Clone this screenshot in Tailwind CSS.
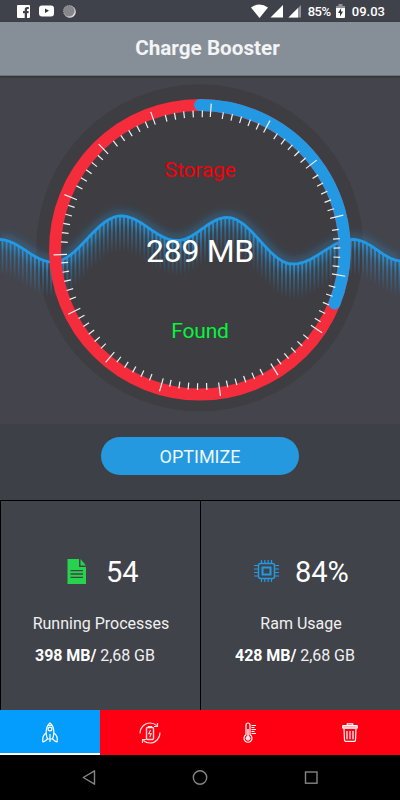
<!DOCTYPE html>
<html lang="en">

<head>
    <meta charset="UTF-8">
    <meta name="viewport" content="width=device-width, initial-scale=1.0">
    <title>Charge Booster</title>
    <script src="https://cdn.jsdelivr.net/npm/@tailwindcss/browser@4"></script>
</head>

<body class="bg-black">
    <div class="w-[400px] h-[800px] flex flex-col overflow-hidden bg-[#3f4149] text-white font-['Roboto',sans-serif]">

        <!-- Status bar -->
        <div class="h-[22px] shrink-0 flex items-center justify-between bg-[#40424b] pl-[17px] pr-[15px]">
            <div class="flex items-center gap-[9px]">
                <svg class="w-[13px] h-[13px]" viewBox="0 0 13 13">
                    <path fill="#fff" d="M1 0h11a1 1 0 0 1 1 1v11a1 1 0 0 1-1 1h-2V8.2h1.6V6.1H10V5c0-.7.3-1 1-1h.8V2h-1.6C8.500 2 7.700 3.100 7.700 4.700v1.400H6v2.100h1.700V13H1a1 1 0 0 1-1-1V1a1 1 0 0 1 1-1z" />
                </svg>
                <svg class="w-[15px] h-[12px]" viewBox="0 0 15 12">
                    <rect y=".5" width="15" height="11" rx="3" fill="#fff" />
                    <path fill="#30323a" d="M6 3.600v4.500L10 5.800z" />
                </svg>
                <svg class="w-[13px] h-[13px]" viewBox="0 0 13 13">
                    <circle cx="6.800" cy="6.800" r="6" fill="#e8e8e8" />
                    <circle cx="6" cy="6" r="5.600" fill="#85878b" stroke="#aaa" stroke-dasharray="1 1" />
                </svg>
            </div>
            <div class="flex items-center text-[13px] leading-[22px] font-medium pt-[2px]">
                <svg class="w-[50px] h-[14px] mr-[7px] -mt-[2px]" viewBox="0 0 50 14">
                    <path fill="#fff" d="M0 3.500Q8.500-2.500 17 3.500L8.500 14z" />
                    <path fill="#fff" d="M32 1v12.500H19.500z" />
                    <path fill="#8e9096" d="M50 1v12.500H37.500z" />
                    <path fill="#fff" d="M47 4v9.500h-9.500z" />
                </svg>
                <span class="w-[24px] whitespace-nowrap tracking-[-0.6px]">85%</span>
                <svg class="w-[9px] h-[14px] ml-[4px] mr-[7px] -mt-[2px]" viewBox="0 0 9 14">
                    <path fill="#8e9096" d="M2.500 0h4v2H9v2H0V2h2.500z" />
                    <path fill="#fff" d="M0 4h9v9a1 1 0 0 1-1 1H1a1 1 0 0 1-1-1z" />
                    <path fill="#30323a" d="M5.200 4L2 9h2v3.500L7 7.500H5z" />
                </svg>
                <span>09.03</span>
            </div>
        </div>

        <!-- Title bar -->
        <div class="h-[54px] shrink-0 z-10 flex items-center justify-center pl-[15px] bg-[#868f98] border-b border-[#6b737b] shadow-[0_1px_2px_rgba(0,0,0,0.35)]">
            <h1 class="text-[20.7px] font-bold text-[#f3f4f5]">Charge Booster</h1>
        </div>

        <!-- Gauge -->
        <div class="relative h-[348px] shrink-0 bg-[#44444c]">
            <svg class="block w-[400px] h-[348px]" viewBox="0 76 400 348">
                <defs>
                    <linearGradient id="fade" x1="0" y1="0" x2="0" y2="1">
                        <stop offset="0" stop-color="#2499e3" stop-opacity=".9" />
                        <stop offset=".4" stop-color="#2499e3" stop-opacity=".45" />
                        <stop offset="1" stop-color="#2499e3" stop-opacity="0" />
                    </linearGradient>
                    <filter id="glow" x="-5%" y="-60%" width="110%" height="220%">
                        <feGaussianBlur stdDeviation="5" />
                    </filter>
                </defs>
                <circle cx="199.800" cy="247.800" r="163.500" fill="#3e3d42" />
                <path id="wave-glow" fill="none" stroke="#2499e3" stroke-opacity=".4" stroke-width="9" filter="url(#glow)" />
                <g id="bars"></g>
                <path id="wave" fill="none" stroke="#2499e3" stroke-width="2.800" />
                <circle cx="199.900" cy="249.700" r="144.800" fill="none" stroke="#f52c3b" stroke-width="12" />
                <path d="M200 104.900A144.800 144.800 0 0 1 334.400 303.500" fill="none" stroke="#2499e3" stroke-width="12" stroke-linecap="round" />
                <g id="ticks" stroke="#f1f1f1" stroke-width="1.200"></g>
            </svg>
            <div class="absolute inset-0 text-center">
                <p class="mt-[82px] text-[21px] leading-[24px] tracking-[-0.2px] text-[#f40009]">Storage</p>
                <p class="mt-[49px] text-[32px] leading-[40px] tracking-[-0.3px]">289 MB</p>
                <p class="mt-[48px] text-[21px] leading-[24px] tracking-[-0.2px] text-[#04f63a]">Found</p>
            </div>
        </div>

        <div class="h-[76px] shrink-0 flex justify-center bg-[#3e4047] pt-[13px]">
            <button class="w-[198px] h-[38px] rounded-full bg-[#2499e0] text-[18px] text-[#edf6fc]">OPTIMIZE</button>
        </div>

        <!-- Stats -->
        <div class="h-[210px] shrink-0 grid grid-cols-2 border-t border-black bg-[#41434a]">
            <div class="border-l border-black pt-[53px]">
                <div class="flex items-center h-[38px] pl-[66px]">
                    <svg class="w-[20px] h-[25px] mr-[19px] -mt-[3px]" viewBox="0 0 20 25">
                        <path fill="#27d34d" d="M.5 0h11.500v8H19v17H.5z" />
                        <path fill="#27d34d" d="M13.500 0v6.500H19z" />
                        <path stroke="#414349" stroke-width="1.300" d="M3.500 11.700h12.500M3.500 15h12.500M3.500 18.300h12.500" />
                    </svg>
                    <span class="text-[29px]">54</span>
                </div>
                <p class="mt-[21px] pl-[1px] text-center text-[16px] leading-[22px] text-[#f0f0f0]">Running Processes</p>
                <p class="mt-[10px] pl-[34px] text-[16px] leading-[22px] tracking-[-0.05px] text-[#f0f0f0]"><b class="text-white">398 MB/</b> 2,68 GB</p>
            </div>
            <div class="border-l border-black pt-[53px]">
                <div class="flex items-center h-[38px] pl-[53px]">
                    <svg class="w-[25px] h-[25px] mr-[16px] -mt-[3px]" viewBox="0 0 25 25" fill="none" stroke="#2499e0">
                        <rect x="4.500" y="4.500" width="16" height="15" rx="2" stroke-width="1.500" />
                        <rect x="8.500" y="8.500" width="8" height="7" stroke-width="2" />
                        <path stroke-width="1.200" d="M7.500 1v3.500M10.800 1v3.500M14.200 1v3.500M17.500 1v3.500M7.500 19.500V23M10.800 19.500V23M14.200 19.500V23M17.500 19.500V23M0 6.500h4.500M0 10h4.500M0 13.500h4.500M0 17h4.500M20.500 6.500H25M20.500 10H25M20.500 13.500H25M20.500 17H25" />
                    </svg>
                    <span class="text-[29px]">84%</span>
                </div>
                <p class="mt-[21px] pl-[1px] text-center text-[16px] leading-[22px] text-[#f0f0f0]">Ram Usage</p>
                <p class="mt-[10px] pl-[34px] text-[16px] leading-[22px] tracking-[-0.05px] text-[#f0f0f0]"><b class="text-white">428 MB/</b> 2,68 GB</p>
            </div>
        </div>

        <!-- Tabs -->
        <div class="h-[45px] shrink-0 grid grid-cols-4 bg-[#fe0011]">
            <div class="flex items-center justify-center bg-[#049dfe] border-b-2 border-white">
                <svg class="w-[16px] h-[21px] mt-[1px]" viewBox="0 0 16 21" fill="none" stroke="#fff" stroke-width="1.200" stroke-linejoin="round">
                    <path d="M8 1C5 3.500 4.200 6.500 4.200 10c0 2.600.5 5 1.300 7h5c.8-2 1.300-4.400 1.300-7C11.800 6.500 11 3.500 8 1z" />
                    <circle cx="8" cy="7" r="1.900" />
                    <path d="M6 3.500h4M4.200 11C2 12.500.8 14.500.8 16.500v3.300C2 19.800 3.500 19 5.500 17M11.800 11c2.200 1.500 3.400 3.500 3.400 5.500v3.300c-1.200 0-2.700-.8-4.700-2.800M8 12v8" />
                </svg>
            </div>
            <div class="flex items-center justify-center">
                <svg class="w-[22px] h-[22px]" viewBox="0 0 22 22" fill="none" stroke="#ffd9dc" stroke-width="1.100">
                    <path d="M1 11.500C1 5.500 5.500 1 11 1c2.500 0 4.800.8 6.700 2.500M21 10.500C21 16.500 16.500 21 11 21c-2.500 0-4.800-.8-6.700-2.500" />
                    <path d="M18.500 1v3.500H15M3.500 21v-3.500H7" />
                    <rect x="7.500" y="5.500" width="7" height="12" rx="1" stroke-width="1.400" />
                    <path d="M9.500 5.300V4.500h3v.8M11.500 8L9.800 11.800h2.400L10.700 15.300" />
                </svg>
            </div>
            <div class="flex items-center justify-center">
                <svg class="w-[14px] h-[21px]" viewBox="0 0 14 21" fill="none" stroke="#fff" stroke-width="1.200">
                    <path d="M3 12.800V3a2 2 0 0 1 4 0v9.800a4 4 0 1 1-4 0z" />
                    <circle cx="5" cy="16.300" r="2.400" fill="#ffd9dc" stroke="none" />
                    <path stroke-width="1.400" d="M5 7v9" />
                    <path d="M8.500 3.500H13M8.500 5.500h3M8.500 7.500H13M8.500 9.500h3M8.500 11.500H13" />
                </svg>
            </div>
            <div class="flex items-center justify-center">
                <svg class="w-[16px] h-[19px]" viewBox="0 0 16 19" fill="none" stroke="#fff" stroke-width="1.200">
                    <path d="M5.300 2.500V.9h5.400v1.600" />
                    <rect x=".7" y="2.600" width="14.600" height="2.600" rx=".6" fill="#ff9aa2" />
                    <path d="M2 5.500l.5 11.500q.1 1.300 1.300 1.300h8.400q1.200 0 1.300-1.300L14 5.500M5 8v8.200M8 8v8.200M11 8v8.200" />
                </svg>
            </div>
        </div>

        <!-- Android navigation -->
        <div class="h-[45px] shrink-0 bg-black">
            <svg class="block w-[400px] h-[45px]" viewBox="0 0 400 45" fill="none" stroke="#858585" stroke-width="1.400">
                <path stroke-linejoin="round" d="M94.500 15.800v13.400L83.300 22.500z" />
                <circle cx="200" cy="22.500" r="6.700" />
                <rect x="305.500" y="17" width="11.500" height="11.200" />
            </svg>
        </div>
    </div>

    <script>
        const NS = "http://www.w3.org/2000/svg";

        function add(parent, name, attrs) {
            const el = document.createElementNS(NS, name);
            for (const key in attrs) el.setAttribute(key, attrs[key]);
            parent.appendChild(el);
        }

        // peaks and troughs of the wave
        const points = [[-1, 239.5], [53, 262], [121, 216], [177, 240.5], [227, 217.5], [293, 264], [353, 239.5], [402, 261]];

        function waveY(x) {
            for (let i = 1; i < points.length; i++) {
                const [x0, y0] = points[i - 1];
                const [x1, y1] = points[i];
                if (x <= x1) return y0 + (y1 - y0) * (1 - Math.cos(Math.PI * (x - x0) / (x1 - x0))) / 2;
            }
            return 261;
        }

        let d = "";
        for (let x = 0; x <= 400; x += 2) d += (x ? "L" : "M") + x + " " + waveY(x).toFixed(2);
        document.getElementById("wave").setAttribute("d", d);
        document.getElementById("wave-glow").setAttribute("d", d);

        const bars = document.getElementById("bars");
        for (let x = 1.6; x < 400; x += 4.05) {
            add(bars, "rect", { x: x, y: waveY(x + 1), width: 1.8, height: 36, fill: "url(#fade)" });
        }

        // 15 long ticks with 5 short ones after each
        const ticks = document.getElementById("ticks");
        function tick(angle, inner, outer) {
            const a = angle * Math.PI / 180;
            add(ticks, "line", {
                x1: 200.5 + inner * Math.sin(a), y1: 250.2 - inner * Math.cos(a),
                x2: 200.5 + outer * Math.sin(a), y2: 250.2 - outer * Math.cos(a)
            });
        }
        for (let i = 0; i < 15; i++) {
            const start = 4.2 + i * 24;
            tick(start, 133.5, 147);
            for (let j = 0; j < 5; j++) tick(start + 5.2 + j * 3.84, 133, 139.8);
        }
    </script>
</body>

</html>
